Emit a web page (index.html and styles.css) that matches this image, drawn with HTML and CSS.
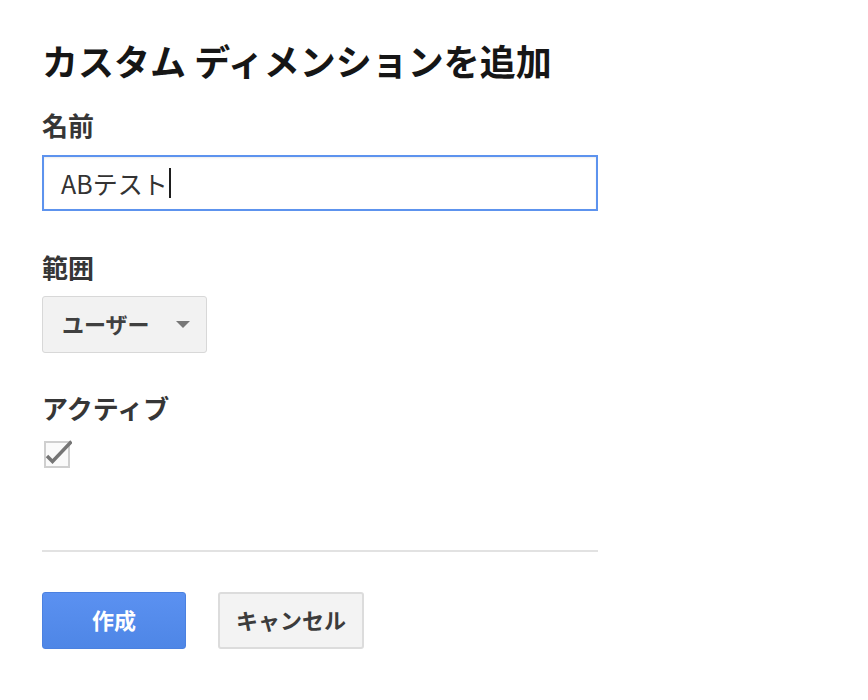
FILE: index.html
```html
<!DOCTYPE html>
<html lang="ja">
<head>
<meta charset="utf-8">
<title>カスタム ディメンションを追加</title>
<link rel="stylesheet" href="styles.css">
</head>
<body>
<main class="dialog">
  <h1 class="title">カスタム ディメンションを追加</h1>

  <section class="field">
    <div class="label">名前</div>
    <div class="textbox" role="textbox">ABテスト<span class="caret"></span></div>
  </section>

  <section class="field">
    <div class="label">範囲</div>
    <button class="select" type="button">
      <span class="select-text">ユーザー</span>
      <svg class="arrow" width="14" height="7" viewBox="0 0 14 7"><path d="M0 0H14L7 7Z" fill="#777"/></svg>
    </button>
  </section>

  <section class="field">
    <div class="label">アクティブ</div>
    <svg class="checkbox" width="30" height="30" viewBox="0 0 30 30">
      <rect x="3" y="4" width="24" height="25" fill="#fafafa" stroke="#cfcfcf" stroke-width="2"/>
      <path d="M5 18 L10.5 23.5 L29.5 3.5" fill="none" stroke="#757575" stroke-width="3.5" stroke-linecap="butt" stroke-linejoin="miter"/>
    </svg>
  </section>

  <hr class="divider">

  <div class="actions">
    <button class="btn btn-primary" type="button">作成</button>
    <button class="btn btn-secondary" type="button">キャンセル</button>
  </div>
</main>
</body>
</html>
```

FILE: styles.css
```css
* { box-sizing: border-box; }

html, body {
  margin: 0;
  padding: 0;
  background: #ffffff;
}

body {
  font-family: "Noto Sans CJK JP", "Noto Sans", sans-serif;
  color: #333333;
}

.dialog {
  padding: 40px 0 0 42px;
  width: 598px;
  display: flex;
  flex-direction: column;
}

.title {
  margin: 0;
  font-size: 36px;
  line-height: 40px;
  font-weight: 700;
  color: #161616;
  letter-spacing: 0;
}

.field {
  display: flex;
  flex-direction: column;
  align-items: flex-start;
}

.label {
  font-size: 26px;
  line-height: 30px;
  font-weight: 700;
  color: #363636;
}

.field:nth-of-type(1) { margin-top: 30px; }
.field:nth-of-type(2) { margin-top: 41px; }
.field:nth-of-type(3) { margin-top: 40px; }

.field:nth-of-type(1) .label { margin-bottom: 15px; }
.field:nth-of-type(2) .label { margin-bottom: 14px; }
.field:nth-of-type(3) .label { margin-bottom: 15px; }

.textbox {
  width: 556px;
  height: 56px;
  border: 2px solid #5d93ee;
  background: #ffffff;
  box-shadow: inset 0 1px 2px rgba(0, 0, 0, 0.08);
  padding: 0 0 0 17px;
  display: flex;
  align-items: center;
  font-size: 25px;
  font-weight: 400;
  color: #333333;
}

.caret {
  display: inline-block;
  width: 2px;
  height: 30px;
  background: #1e1e1e;
  margin-left: 1px;
}

.select {
  width: 165px;
  height: 57px;
  border: 1px solid #d8d8d8;
  border-radius: 3px;
  background: #f2f2f2;
  padding: 0 16px 3px 19px;
  display: flex;
  align-items: center;
  justify-content: space-between;
  font-family: inherit;
  font-size: 22px;
  font-weight: 700;
  color: #404040;
}

.select-text { line-height: 1; }

.arrow { margin-top: 3px; }

.checkbox {
  display: block;
  margin-left: 0;
}

.divider {
  margin: 82px 0 0 0;
  width: 556px;
  height: 2px;
  border: 0;
  background: #e2e2e2;
}

.actions {
  margin-top: 40px;
  display: flex;
  gap: 32px;
}

.btn {
  height: 57px;
  border-radius: 3px;
  font-family: inherit;
  font-size: 22px;
  font-weight: 700;
  display: flex;
  align-items: center;
  justify-content: center;
  padding: 0 0 4px 0;
}

.btn-primary {
  width: 144px;
  background: linear-gradient(#5b91f1, #4e86e6);
  border: 1px solid #4b81e0;
  color: #ffffff;
}

.btn-secondary {
  width: 146px;
  background: #f3f3f3;
  border: 2px solid #dcdcdc;
  color: #3c3c3c;
}
```
